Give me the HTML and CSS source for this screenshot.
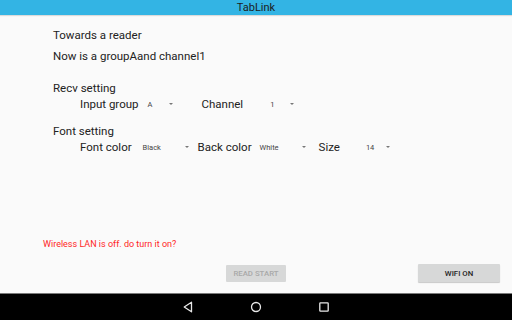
FILE: index.html
```html
<!DOCTYPE html>
<html>
<head>
<meta charset="utf-8">
<link rel="stylesheet" href="styles.css">
</head>
<body>
<div class="screen">
  <header class="titlebar">TabLink</header>
  <main class="content">
    <div class="text line1">Towards a reader</div>
    <div class="text line2">Now is a groupAand channel1</div>
    <div class="text section recv">Recv setting</div>
    <div class="row">
      <span class="label">Input group</span>
      <span class="spin spin-group"><span class="val">A</span><span class="arrow"></span></span>
      <span class="label">Channel</span>
      <span class="spin spin-channel"><span class="val">1</span><span class="arrow"></span></span>
    </div>
    <div class="text section font">Font setting</div>
    <div class="row">
      <span class="label">Font color</span>
      <span class="spin spin-fg"><span class="val">Black</span><span class="arrow"></span></span>
      <span class="label">Back color</span>
      <span class="spin spin-bg"><span class="val">White</span><span class="arrow"></span></span>
      <span class="label">Size</span>
      <span class="spin spin-size"><span class="val">14</span><span class="arrow"></span></span>
    </div>
    <div class="footer">
      <div class="message">Wireless LAN is off. do turn it on?</div>
      <div class="buttons">
        <button class="btn btn-disabled">READ START</button>
        <button class="btn btn-wifi">WIFI ON</button>
      </div>
    </div>
  </main>
  <nav class="navbar">
    <svg class="nav-icon" width="12" height="12" viewBox="0 0 12 12"><path d="M9.5 1.2 L2.2 6 L9.5 10.8 Z" fill="none" stroke="#e8e8e8" stroke-width="1.3" stroke-linejoin="round"/></svg>
    <svg class="nav-icon" width="12" height="12" viewBox="0 0 12 12"><circle cx="6" cy="6" r="4.5" fill="none" stroke="#e8e8e8" stroke-width="1.3"/></svg>
    <svg class="nav-icon" width="12" height="12" viewBox="0 0 12 12"><rect x="1.8" y="1.8" width="8.4" height="8.4" rx="0.6" fill="none" stroke="#e8e8e8" stroke-width="1.3"/></svg>
  </nav>
</div>
</body>
</html>
```
FILE: styles.css
```css
* { box-sizing: border-box; }
html, body { margin: 0; padding: 0; }
body {
  width: 512px;
  height: 320px;
  overflow: hidden;
  font-family: Roboto, "Liberation Sans", sans-serif;
  background: #fafafa;
}
.screen {
  width: 512px;
  height: 320px;
  display: flex;
  flex-direction: column;
}
.titlebar {
  height: 15px;
  line-height: 16px;
  background: #33b4e4;
  color: #1c1c1c;
  font-size: 11px;
  text-align: center;
  box-shadow: 0 1px 1px rgba(0,0,0,0.12);
  position: relative;
  z-index: 1;
}
.content {
  flex: 1;
  display: flex;
  flex-direction: column;
  padding-left: 53px;
}
.text {
  font-size: 11.5px;
  line-height: 16px;
  color: #222;
}
.line1 { margin-top: 12px; }
.line2 { margin-top: 5px; }
.recv { margin-top: 16px; }
.font { margin-top: 11px; }
.row {
  display: flex;
  align-items: center;
  height: 16px;
  padding-left: 27px;
  font-size: 11.5px;
  color: #222;
}
.label { white-space: nowrap; }
.spin {
  display: flex;
  align-items: center;
}
.val {
  font-size: 7.5px;
  color: #444;
}
.arrow {
  width: 0;
  height: 0;
  border-left: 2.5px solid transparent;
  border-right: 2.5px solid transparent;
  border-top: 2.5px solid #777;
}
.spin-group { padding-left: 9px; margin-right: 29px; }
.spin-group .val { width: 21px; }
.spin-channel { padding-left: 27px; }
.spin-channel .val { width: 20px; }
.spin-fg { padding-left: 11px; margin-right: 9px; }
.spin-fg .val { width: 42px; }
.spin-bg { padding-left: 8px; margin-right: 13px; }
.spin-bg .val { width: 42px; }
.spin-size { padding-left: 26px; }
.spin-size .val { width: 20px; }

.footer {
  margin-top: auto;
  padding-bottom: 11px;
}
.message {
  margin-left: -10px;
  font-size: 9px;
  line-height: 12px;
  color: #ff1f1f;
}
.buttons {
  margin-left: -53px;
  margin-top: 14px;
  display: grid;
  grid-template-columns: 1fr auto 1fr;
  align-items: center;
}
.btn {
  font-family: Roboto, "Liberation Sans", sans-serif;
  font-size: 7.8px;
  font-weight: 500;
  border: none;
  border-radius: 1px;
  padding: 0;
  height: 18px;
  background: #d7d8d8;
}
.btn-disabled {
  grid-column: 2;
  width: 60px;
  height: 17px;
  color: #a9a9a9;
}
.btn-wifi {
  grid-column: 3;
  justify-self: end;
  margin-right: 12px;
  width: 82px;
  color: #1f1f1f;
  box-shadow: 0 1px 1px rgba(0,0,0,0.2);
}
.navbar {
  height: 27px;
  background: #000;
  border-top: 1px solid #7a7a7a;
  display: flex;
  justify-content: center;
  align-items: center;
  gap: 56px;
}
.nav-icon { display: block; }
```
